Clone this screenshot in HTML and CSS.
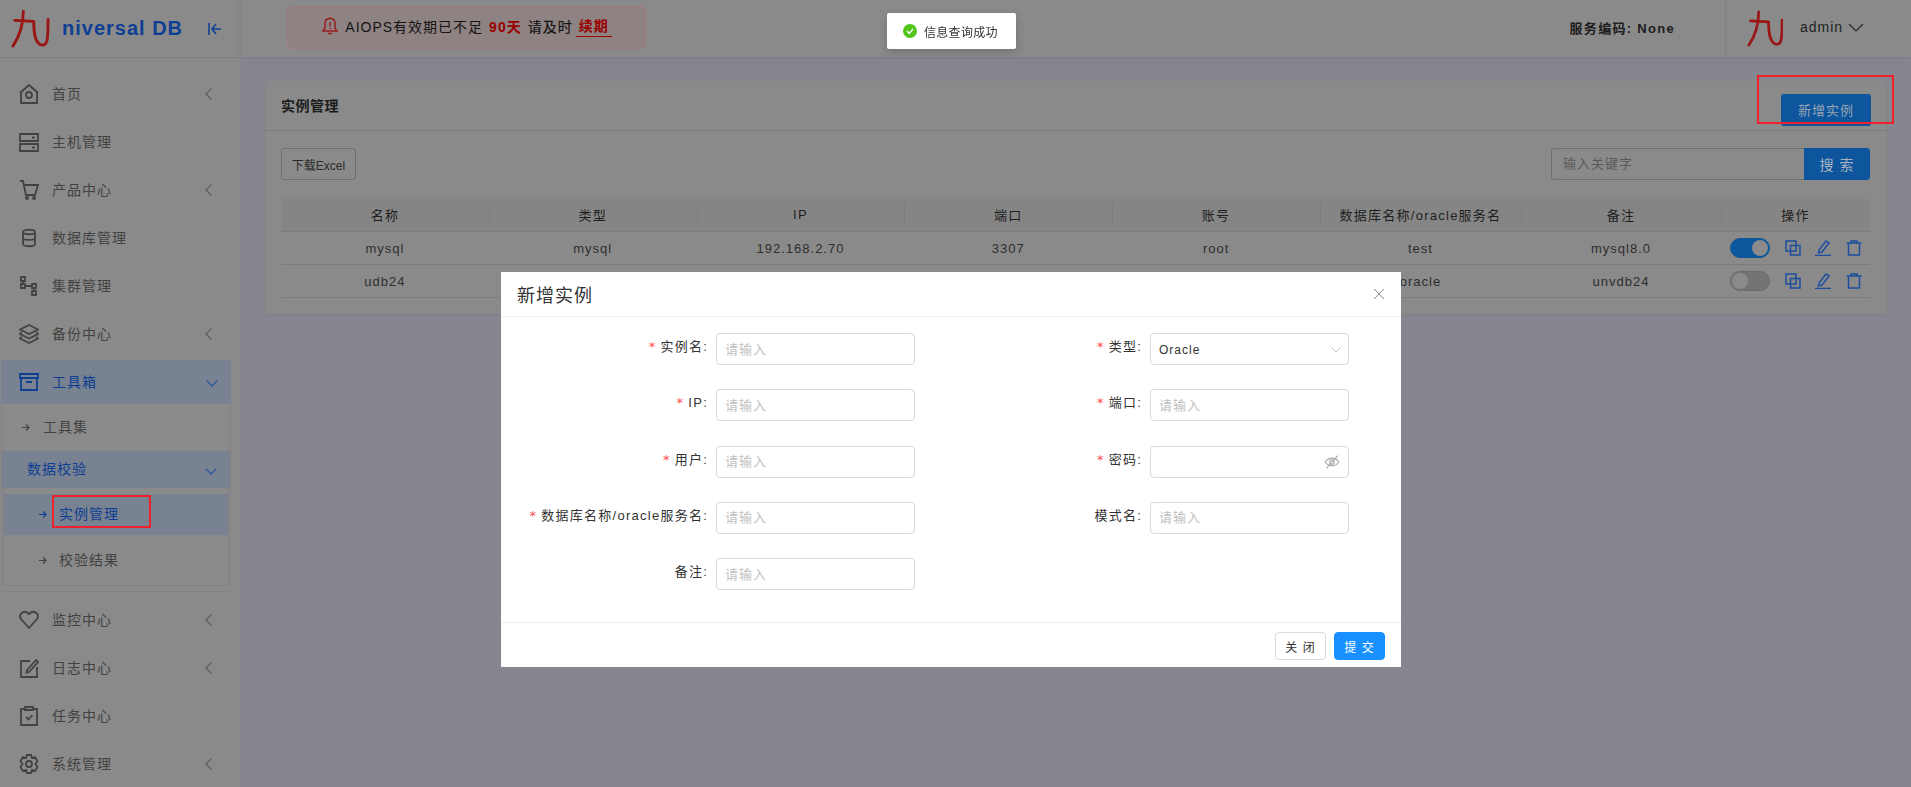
FILE: index.html
```html
<!DOCTYPE html>
<html lang="zh-CN">
<head>
<meta charset="utf-8">
<title>Universal DB</title>
<link rel="stylesheet" href="styles.css">
</head>
<body>
<div class="app">
  <aside class="sidebar">
    <div class="brand">
      <svg class="logo" viewBox="0 0 40 40"><path d="M13 1C13 14 10 26 2 38M4 11L24 12C24 24 25 36 33 37C38 37 39 33 39 10"/></svg>
      <span class="brand-name">niversal DB</span>
      <svg class="collapse" viewBox="0 0 16 16"><path d="M2 2V14M14 8H5M9 3L5 8L9 13"/></svg>
    </div>
    <nav class="nav">
      <a class="item"><svg class="ico" viewBox="0 0 20 20"><path d="M10 1L2 8V19H18V8ZM1 9L10 1L19 9"/><circle cx="10" cy="11" r="3"/></svg><span>首页</span><i class="chev-left"></i></a>
      <a class="item"><svg class="ico" viewBox="0 0 20 20"><path d="M1 2H19V9H1ZM1 12H19V19H1ZM13 5.500H16M13 15.500H16"/></svg><span>主机管理</span></a>
      <a class="item"><svg class="ico" viewBox="0 0 20 20"><path d="M1 1H4L7 15H16L19 5H5"/><circle cx="8" cy="18" r="1"/><circle cx="15" cy="18" r="1"/></svg><span>产品中心</span><i class="chev-left"></i></a>
      <a class="item"><svg class="ico" viewBox="0 0 20 20"><path d="M4 4C4 1 16 1 16 4V16C16 19 4 19 4 16ZM4 4C4 7 16 7 16 4M4 10C4 12.500 16 12.500 16 10"/></svg><span>数据库管理</span></a>
      <a class="item"><svg class="ico" viewBox="0 0 20 20"><path d="M2 1H6V5H2ZM2 8H6V12H2ZM13 8H17V12H13ZM13 15H17V19H13ZM4 5V8M6 10H13M15 12V15"/></svg><span>集群管理</span></a>
      <a class="item"><svg class="ico" viewBox="0 0 22 22"><path d="M11 1L21 6L11 11L1 6ZM3 9L1 11L11 16L21 11L19 9M3 14L1 16L11 21L21 16L19 14"/></svg><span>备份中心</span><i class="chev-left"></i></a>
      <a class="item active"><svg class="ico" viewBox="0 0 20 20"><path d="M1 2H19V6H1ZM2 6V18H18V6M7 10H13"/></svg><span>工具箱</span><i class="chev-down"></i></a>
      <div class="sub">
        <a class="sub-row"><svg class="arrow" viewBox="0 0 9 9"><path d="M1 4.500H8M5 1.500L8 4.500L5 7.500"/></svg><span>工具集</span></a>
        <a class="group"><span>数据校验</span><i class="chev-down"></i></a>
        <div class="sub-inner">
          <a class="leaf current"><svg class="arrow" viewBox="0 0 9 9"><path d="M1 4.500H8M5 1.500L8 4.500L5 7.500"/></svg><span>实例管理</span></a>
          <a class="leaf tall"><svg class="arrow" viewBox="0 0 9 9"><path d="M1 4.500H8M5 1.500L8 4.500L5 7.500"/></svg><span>校验结果</span></a>
        </div>
      </div>
      <a class="item after-sub"><svg class="ico" viewBox="0 0 20 20"><path d="M10 18L2 9C-1 4 5 -1 10 4C15 -1 21 4 18 9Z"/></svg><span>监控中心</span><i class="chev-left"></i></a>
      <a class="item"><svg class="ico" viewBox="0 0 20 20"><path d="M11 3H2V19H18V9M8 12L17 2L19 4L10 14L7.500 14.500Z"/></svg><span>日志中心</span><i class="chev-left"></i></a>
      <a class="item"><svg class="ico" viewBox="0 0 20 20"><path d="M6 3H2V19H18V3H14M6 1H14V4H6ZM7 11L9.500 13.500L13.500 9"/></svg><span>任务中心</span></a>
      <a class="item"><svg class="ico" viewBox="0 0 20 20"><path d="M8 1H12L13 4L16 3L18.500 7L16.500 10L18.500 13L16 17L13 16L12 19H8L7 16L4 17L1.500 13L3.500 10L1.500 7L4 3L7 4Z"/><circle cx="10" cy="10" r="3"/></svg><span>系统管理</span><i class="chev-left"></i></a>
    </nav>
  </aside>

  <div class="content">
    <header class="topbar">
      <div class="notice">
        <svg class="bell" viewBox="0 0 18 20"><path d="M2 15H16L14 12V7C14 4 12 2.500 9 2.500C6 2.500 4 4 4 7V12ZM9 1V2.500M7 17.500H11M9 6V10.500M9 12V13"/></svg>
        <span>AIOPS有效期已不足</span><b class="red">90天</b><span class="strong">请及时</span><span class="renew">续期</span>
      </div>
      <div class="top-right">
        <span class="service">服务编码: None</span>
        <div class="user">
          <svg class="logo small" viewBox="0 0 40 40"><path d="M13 1C13 14 10 26 2 38M4 11L24 12C24 24 25 36 33 37C38 37 39 33 39 10"/></svg>
          <span class="username">admin</span>
          <svg class="user-chev" viewBox="0 0 16 9"><path d="M1 1L8 8L15 1"/></svg>
        </div>
      </div>
    </header>

    <main class="main">
      <section class="card">
        <div class="card-head">
          <h2 class="card-title">实例管理</h2>
          <button class="btn-primary">新增实例</button>
        </div>
        <div class="card-body">
          <div class="toolbar">
            <button class="btn-excel">下载Excel</button>
            <div class="search">
              <span class="search-input">输入关键字</span>
              <button class="search-btn">搜 索</button>
            </div>
          </div>
          <table class="grid">
            <colgroup>
              <col class="c-std"><col class="c-std"><col class="c-std"><col class="c-std"><col class="c-std"><col class="c-db"><col class="c-note"><col class="c-op">
            </colgroup>
            <thead>
              <tr><th>名称</th><th>类型</th><th>IP</th><th>端口</th><th>账号</th><th>数据库名称/oracle服务名</th><th>备注</th><th>操作</th></tr>
            </thead>
            <tbody>
              <tr>
                <td>mysql</td><td>mysql</td><td>192.168.2.70</td><td>3307</td><td>root</td><td>test</td><td>mysql8.0</td>
                <td><div class="ops">
                  <span class="switch on"></span>
                  <svg class="op" viewBox="0 0 16 16"><path d="M1 1H11V11H1ZM5.500 5.500H15V15H5.500Z"/></svg>
                  <svg class="op" viewBox="0 0 16 16"><path d="M4 10L11 1L14 3L7 12L3.500 13ZM0 15.500H16"/></svg>
                  <svg class="op" viewBox="0 0 16 16"><path d="M0.500 3H15.500M5 3V1H11V3M2.500 3V15H13.500V3"/></svg>
                </div></td>
              </tr>
              <tr>
                <td>udb24</td><td>oracle</td><td>192.168.2.24</td><td>1521</td><td>system</td><td>oracle</td><td>unvdb24</td>
                <td><div class="ops">
                  <span class="switch"></span>
                  <svg class="op" viewBox="0 0 16 16"><path d="M1 1H11V11H1ZM5.500 5.500H15V15H5.500Z"/></svg>
                  <svg class="op" viewBox="0 0 16 16"><path d="M4 10L11 1L14 3L7 12L3.500 13ZM0 15.500H16"/></svg>
                  <svg class="op" viewBox="0 0 16 16"><path d="M0.500 3H15.500M5 3V1H11V3M2.500 3V15H13.500V3"/></svg>
                </div></td>
              </tr>
            </tbody>
          </table>
        </div>
      </section>
    </main>
  </div>
</div>

<div class="mask">
  <div class="modal">
    <div class="modal-head">
      <h3 class="modal-title">新增实例</h3>
      <svg class="modal-close" viewBox="0 0 10 10"><path d="M0 0L10 10M10 0L0 10"/></svg>
    </div>
    <form class="modal-body">
      <div class="field"><label class="label req">实例名:</label><div class="control ph">请输入</div></div>
      <div class="field"><label class="label req">类型:</label><div class="control value">Oracle<svg class="sel-chev" viewBox="0 0 12 7"><path d="M1 1L6 6L11 1"/></svg></div></div>
      <div class="field"><label class="label req">IP:</label><div class="control ph">请输入</div></div>
      <div class="field"><label class="label req">端口:</label><div class="control ph">请输入</div></div>
      <div class="field"><label class="label req">用户:</label><div class="control ph">请输入</div></div>
      <div class="field"><label class="label req">密码:</label><div class="control"><svg class="eye" viewBox="0 0 14 14"><path d="M1 7C4 2.500 10 2.500 13 7C10 11.500 4 11.500 1 7ZM12 1.500L2 12.500"/><circle cx="7" cy="7" r="2"/></svg></div></div>
      <div class="field"><label class="label req">数据库名称/oracle服务名:</label><div class="control ph">请输入</div></div>
      <div class="field"><label class="label">模式名:</label><div class="control ph">请输入</div></div>
      <div class="field"><label class="label">备注:</label><div class="control ph">请输入</div></div>
    </form>
    <div class="modal-foot">
      <button class="btn-close" type="button">关 闭</button>
      <button class="btn-submit" type="button">提 交</button>
    </div>
  </div>
</div>

<div class="toast">
  <svg class="toast-ico" viewBox="0 0 14 14"><circle class="toast-disc" cx="7" cy="7" r="7"/><path d="M4 7L6.300 9.500L10 5"/></svg>
  <span>信息查询成功</span>
</div>

<div class="mark mark-side"></div>
<div class="mark mark-add"></div>
</body>
</html>
```
FILE: styles.css
```css
* { box-sizing: border-box; }
html, body { margin: 0; height: 100%; overflow: hidden; }
body {
  font-family: "Liberation Sans", "Noto Sans CJK SC", sans-serif;
  font-size: 13px;
  letter-spacing: 1px;
  color: #333;
  background: #868690;
}
button { font: inherit; letter-spacing: inherit; cursor: pointer; }
a { display: flex; }

.app { display: flex; height: 787px; }

/* sidebar */
.sidebar { width: 241px; flex: none; background: #8a8a8a; color: #424242; font-size: 14px; }
.brand { height: 58px; display: flex; align-items: center; padding-left: 10px; border-bottom: 1px solid #7e7e7e; }
.logo { width: 40px; height: 38px; flex: none; fill: none; stroke: #9a1515; stroke-width: 3; stroke-linecap: round; stroke-linejoin: round; }
.brand-name { margin-left: 12px; font-size: 20px; font-weight: 700; letter-spacing: 1px; color: #0f3f94; }
.collapse { width: 16px; height: 16px; margin-left: 24px; fill: none; stroke: #0f3f94; stroke-width: 1.600; }
.nav { padding: 12px 0 0 1px; width: 231px; display: flex; flex-direction: column; }
.item { height: 48px; align-items: center; padding-left: 18px; position: relative; }
.item > span { margin-left: 13px; padding-bottom: 3px; }
.ico { width: 20px; height: 20px; flex: none; fill: none; stroke: currentColor; stroke-width: 1.800; }
.chev-left { margin-left: auto; margin-right: 16px; width: 8px; height: 8px; border-left: 1px solid #555; border-bottom: 1px solid #555; transform: rotate(45deg); }
.chev-down { margin-left: auto; margin-right: 15px; width: 8px; height: 8px; border-left: 1.400px solid #1c4c9c; border-bottom: 1.400px solid #1c4c9c; transform: translateY(-1px) rotate(-45deg); }
.item.active { height: 44px; margin-top: 2px; color: #0f3f94; background: #788290; }
.sub { height: 188px; border: 1px solid #828282; border-top: 0; }
.sub-row { height: 47px; align-items: center; padding-left: 19px; }
.sub-row span { margin-left: 13px; padding-bottom: 3px; }
.arrow { width: 9px; height: 9px; flex: none; fill: none; stroke: currentColor; stroke-width: 1.200; }
.group { height: 37px; align-items: center; padding-left: 25px; color: #0f3f94; background: #788290; }
.group span { padding-bottom: 3px; }
.sub-inner { height: 98px; margin: 0 1px; padding-top: 6px; border: 1px solid #828282; border-top: 0; }
.leaf { height: 41px; align-items: center; padding-left: 34px; }
.leaf span { margin-left: 12px; padding-bottom: 3px; }
.leaf.current { color: #0f3f94; background: #788290; }
.leaf.tall { height: 50px; }
.after-sub { margin-top: 4px; }

/* top bar */
.content { flex: 1; min-width: 0; display: flex; flex-direction: column; }
.topbar { height: 57px; flex: none; display: flex; align-items: center; justify-content: space-between; background: #8a8a8a; box-shadow: 0 1px 4px #7c7c88; position: relative; }
.notice { margin-left: 46px; width: 359px; height: 43px; margin-top: -3px; display: flex; align-items: center; justify-content: center; gap: 6px; padding-bottom: 2px; border: 1px solid #a07a7a; border-radius: 6px; background: #8e8282; font-size: 14px; color: #141414; }
.bell { width: 18px; height: 20px; fill: none; stroke: #9a2020; stroke-width: 1.500; }
.red { color: #990000; font-weight: 700; }
.strong { font-weight: 400; -webkit-text-stroke: .2px #141414; }
.renew { color: #990000; font-weight: 700; border-bottom: 1px solid #990000; padding: 0 3px 1px; margin-left: -3px; }
.top-right { display: flex; align-items: center; height: 100%; }
.service { font-weight: 700; font-size: 13px; letter-spacing: 1.300px; color: #1c1c1c; margin-right: 50px; padding-bottom: 3px; }
.user { height: 100%; width: 186px; border-left: 1px solid #828282; padding-left: 21px; display: flex; align-items: center; }
.logo.small { width: 36px; height: 38px; }
.username { margin-left: 17px; font-size: 14px; color: #222; padding-bottom: 3px; }
.user-chev { width: 16px; height: 9px; margin-left: 5px; margin-bottom: 3px; fill: none; stroke: #222; stroke-width: 1.100; }

/* card */
.main { flex: 1; padding: 24px; }
.card { height: 233px; background: #8a8a8a; border-radius: 4px; box-shadow: 0 1px 3px #80808a; }
.card-head { height: 50px; display: flex; align-items: center; justify-content: space-between; padding: 0 16px; border-bottom: 1px solid #7a7a7a; }
.card-title { margin: 0 0 2px; font-size: 14px; font-weight: 700; letter-spacing: .5px; color: #1c1c1c; }
.btn-primary { width: 90px; height: 32px; margin-top: 8px; border: 0; border-radius: 3px; background: #0d559c; color: #9aa6b2; }
.card-body { padding: 17px 17px 0 16px; }
.toolbar { height: 32px; display: flex; justify-content: space-between; }
.btn-excel { width: 75px; height: 32px; padding: 0; border: 1px solid #6f6f6f; border-radius: 3px; background: #8a8a8a; color: #2a2a2a; font-size: 12px; letter-spacing: 0; }
.search { display: flex; width: 319px; }
.search-input { flex: 1; height: 32px; line-height: 30px; padding-left: 11px; border: 1px solid #6f6f6f; border-right: 0; border-radius: 3px 0 0 3px; color: #5a5a5a; }
.search-btn { width: 66px; height: 32px; border: 0; border-radius: 0 3px 3px 0; background: #0d559c; color: #a8b4c0; font-size: 14px; }

/* table */
.grid { width: 1589px; margin-top: 19px; table-layout: fixed; border-collapse: collapse; text-align: center; }
.c-std { width: 207.800px; }
.c-db { width: 201px; }
.c-note { width: 200px; }
.c-op { width: 149px; }
.grid th { height: 32px; padding: 0; font-weight: 400; letter-spacing: 1.250px; color: #1e1e1e; background: #858585; border-bottom: 1px solid #7c7c7c; position: relative; }
.grid th + th::before { content: ""; position: absolute; left: 0; top: 5px; bottom: 5px; width: 1px; background: #7c7c7c; }
.grid td { height: 33px; padding: 1px 0 0; color: #2e2e2e; border-bottom: 1px solid #7c7c7c; }
.ops { display: flex; align-items: center; padding-left: 9px; }
.switch { flex: none; width: 40px; height: 20px; border-radius: 10px; background: #747474; border: 1px solid #6a6a6a; position: relative; margin-right: 15px; }
.switch::after { content: ""; position: absolute; top: 1px; left: 1px; width: 16px; height: 16px; border-radius: 50%; background: #8a8a8a; }
.switch.on { background: #0d559c; border-color: #0d559c; }
.switch.on::after { left: auto; right: 1px; }
.op { flex: none; width: 16px; height: 16px; margin-right: 14.500px; fill: none; stroke: #1d4f9e; stroke-width: 1.500; }
.op:last-child { margin-right: 0; }

/* modal */
.mask { position: fixed; inset: 0; padding: 272px 0 0 501px; }
.modal { width: 900px; height: 395px; background: #fff; display: flex; flex-direction: column; }
.modal-head { height: 45px; flex: none; display: flex; align-items: center; justify-content: space-between; padding: 0 17px 0 16px; border-bottom: 1px solid #eee; }
.modal-title { margin: 0; font-size: 18px; font-weight: 400; color: #333; }
.modal-close { width: 10px; height: 10px; fill: none; stroke: #8c8c8c; stroke-width: 1; }
.modal-body { flex: 1; display: grid; grid-template-columns: 434px 434px; grid-auto-rows: 32px; row-gap: 24.250px; padding: 16px 0 0 16px; }
.field { display: flex; }
.label { width: 191px; flex: none; margin-right: 8px; text-align: right; line-height: 28px; letter-spacing: 1.250px; color: #333; white-space: nowrap; }
.label.req::before { content: "*"; color: #ff4d4f; margin-right: 4px; font-family: "DejaVu Sans", sans-serif; }
.control { width: 199px; height: 32px; border: 1px solid #d9d9d9; border-radius: 4px; padding: 1px 0 0 8px; line-height: 30px; font-size: 13px; display: flex; align-items: center; justify-content: space-between; }
.control.ph { color: #bfbfbf; }
.control.value { color: #333; font-size: 12px; }
.sel-chev { width: 12px; height: 7px; margin-right: 6px; fill: none; stroke: #c4c4c4; stroke-width: 1; }
.eye { width: 16px; height: 16px; margin-left: auto; margin-right: 8px; fill: none; stroke: #a8a8a8; stroke-width: 1; }
.modal-foot { height: 45px; flex: none; display: flex; justify-content: flex-end; align-items: flex-start; gap: 8px; padding: 9px 16px 0 0; border-top: 1px solid #eee; }
.btn-close, .btn-submit { width: 51px; height: 28px; padding: 0; border-radius: 4px; font-size: 12px; }
.btn-close { background: #fff; border: 1px solid #d9d9d9; color: #333; }
.btn-submit { background: #1890ff; border: 1px solid #1890ff; color: #fff; }

/* toast */
.toast { position: fixed; left: 887px; top: 13px; width: 129px; height: 36px; display: flex; align-items: center; gap: 7px; padding-left: 16px; background: #fff; border-radius: 2px; box-shadow: 0 3px 8px rgba(0,0,0,.18); font-size: 12px; letter-spacing: .3px; color: #333; }
.toast-ico { width: 14px; height: 14px; fill: none; stroke: #fff; stroke-width: 1.400; }
.toast-disc { fill: #52c41a; stroke: none; }

/* review marks laid over the capture */
.mark { position: fixed; border: 2px solid #f0202c; }
.mark-side { left: 52px; top: 495px; width: 99px; height: 33px; }
.mark-add { left: 1757px; top: 75px; width: 137px; height: 49px; }
```
